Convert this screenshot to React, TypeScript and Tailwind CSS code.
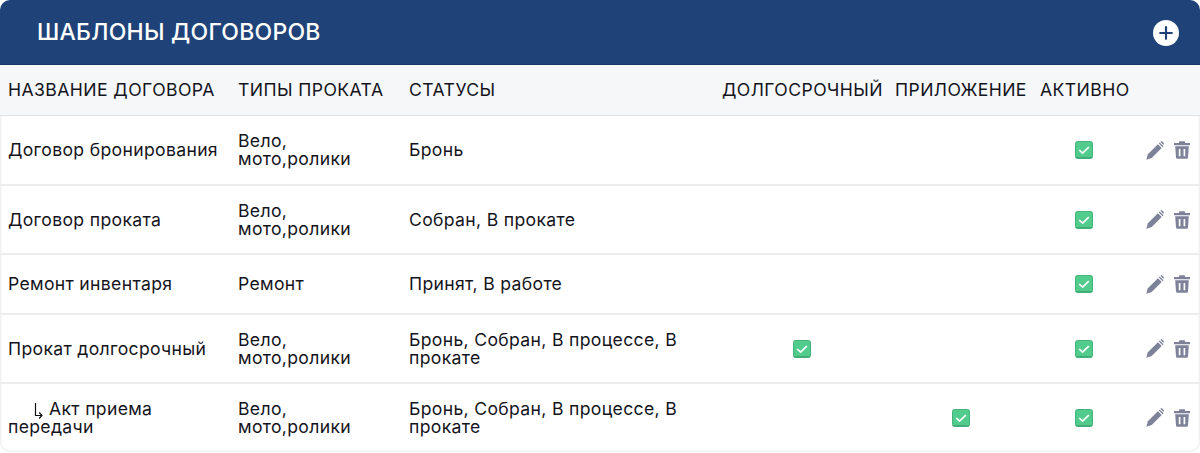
import { Plus } from "lucide-react";

const rows = [
  { name: "Договор бронирования", types: "Вело, мото,ролики", statuses: "Бронь", long: false, app: false, h: "h-[70px] border-b-2" },
  { name: "Договор проката", types: "Вело, мото,ролики", statuses: "Собран, В прокате", long: false, app: false, h: "h-[69px] border-b-2" },
  { name: "Ремонт инвентаря", types: "Ремонт", statuses: "Принят, В работе", long: false, app: false, h: "h-[60px] border-b-2" },
  { name: "Прокат долгосрочный", types: "Вело, мото,ролики", statuses: "Бронь, Собран, В процессе, В прокате", long: true, app: false, h: "h-[69px] border-b-2" },
  { name: "Акт приема передачи", child: true, types: "Вело, мото,ролики", statuses: "Бронь, Собран, В процессе, В прокате", long: false, app: true, h: "h-[67px]" },
];

function Check() {
  return (
    <svg width="18" height="18" viewBox="0 0 18 18" className="block">
      <rect x="0.5" y="0.5" width="17" height="17" rx="2" fill="#52cc8c" stroke="#45b27b" />
      <path d="M1 16.6h16" stroke="#3fa873" strokeWidth="1" />
      <path d="M4.2 9 L7.6 12.2 L13.8 6.2" fill="none" stroke="#fff" strokeWidth="1.7" />
    </svg>
  );
}

function PencilIcon() {
  return (
    <svg width="18" height="19" viewBox="0 0 18 19" className="block">
      <path d="M0.3 18.7l1.6-5.4L11.9 3.3l3.8 3.8-10 10z" fill="#7e8299" />
      <path d="M12.8 2.4l.9-.9 3.8 3.8-.9.9z" fill="#7e8299" />
      <path d="M14.4 0.8l.5-.4a1 1 0 0 1 1.3 0l1.5 1.5a1 1 0 0 1 0 1.3l-.5.5z" fill="#7e8299" />
    </svg>
  );
}

function Trash() {
  return (
    <svg width="16" height="18" viewBox="0 0 16 18" className="block">
      <path d="M5.4.3h5.2l.7 1.7H16v2.2H0V2h4.7z" fill="#7e8299" />
      <path d="M1.2 5.3h13.6l-.8 11.2a1.4 1.4 0 0 1-1.4 1.3H3.4A1.4 1.4 0 0 1 2 16.5z" fill="#7e8299" />
      <path d="M5.6 8v7.2M10.4 8v7.2" stroke="#fff" strokeWidth="1.7" />
    </svg>
  );
}

function Row({ row }: { row: (typeof rows)[number] }) {
  return (
    <div className={`grid grid-cols-[230px_171px_313px_173px_145px_1fr] items-center border-[#ebedef] ${row.h}`}>
      <div className="pl-2 pr-1">
        {row.child && (
          <svg width="9" height="16" viewBox="0 0 9 16" className="mb-[-2px] ml-[26px] mr-[6px] inline-block">
            <path d="M1.5 0v12.5h6M5.2 9.5l2.8 3-2.8 3" fill="none" stroke="#111" strokeWidth="1.2" />
          </svg>
        )}
        {row.name}
      </div>
      <div className="pl-2 pr-6">{row.types}</div>
      <div className="pl-2 pr-6">{row.statuses}</div>
      <div className="flex justify-center pl-[2px]">{row.long && <Check />}</div>
      <div className="flex justify-center pl-[3px]">{row.app && <Check />}</div>
      <div className="flex items-center pl-[43px]">
        <Check />
        <span className="ml-[53px]"><PencilIcon /></span>
        <span className="ml-[10px]"><Trash /></span>
      </div>
    </div>
  );
}

export default function App() {
  return (
    <div className="h-[453px] w-[1200px] overflow-hidden bg-white font-['Inter',sans-serif] text-[17.6px] leading-[18px] tracking-[0.33px] text-[#14141c]">
      <div className="h-[452px] rounded-[10px] shadow-[inset_0_0_0_1.5px_#f0f1f3]">
        <div className="flex h-[65px] items-center justify-between rounded-t-[10px] border-b border-[#193660] bg-[#1f4378] pl-[37px] pr-[21px]">
          <h1 className="text-[23px] font-medium tracking-[0.25px] text-white">ШАБЛОНЫ ДОГОВОРОВ</h1>
          <span className="mt-[2px] flex h-[26px] w-[26px] items-center justify-center rounded-full bg-white">
            <Plus size={20} strokeWidth={2.6} className="text-[#1f4378]" />
          </span>
        </div>
        <div className="grid h-[51px] grid-cols-[230px_171px_313px_173px_145px_1fr] items-center border-b border-[#dfe1e5] bg-[#f5f7f9] tracking-[0.42px]">
          <div className="pl-2">НАЗВАНИЕ ДОГОВОРА</div>
          <div className="pl-2">ТИПЫ ПРОКАТА</div>
          <div className="pl-2">СТАТУСЫ</div>
          <div className="pl-2">ДОЛГОСРОЧНЫЙ</div>
          <div className="pl-2">ПРИЛОЖЕНИЕ</div>
          <div className="pl-2">АКТИВНО</div>
        </div>
        {rows.map((row) => (
          <Row key={row.name} row={row} />
        ))}
      </div>
    </div>
  );
}
